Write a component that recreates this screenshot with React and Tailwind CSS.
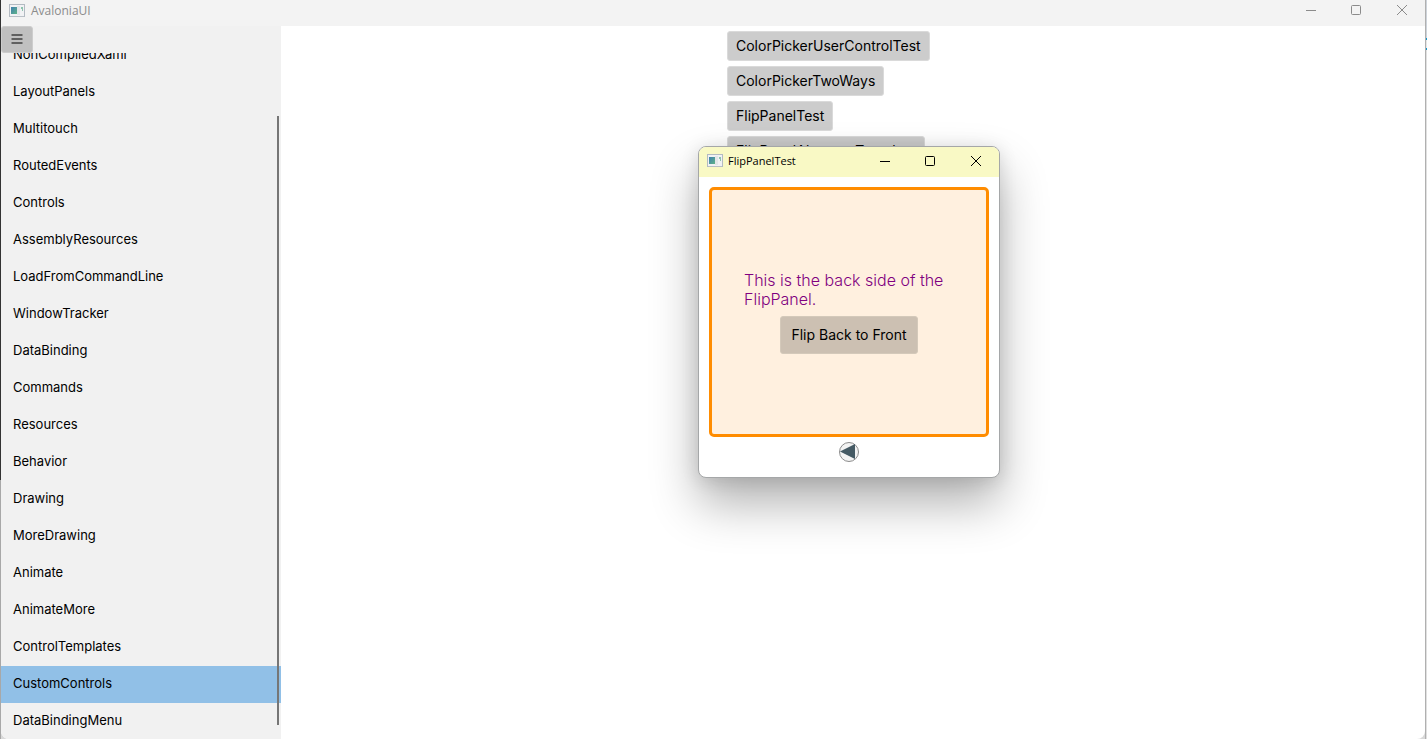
import React from "react";

const NAV_ITEMS = [
  "NonCompiledXaml",
  "LayoutPanels",
  "Multitouch",
  "RoutedEvents",
  "Controls",
  "AssemblyResources",
  "LoadFromCommandLine",
  "WindowTracker",
  "DataBinding",
  "Commands",
  "Resources",
  "Behavior",
  "Drawing",
  "MoreDrawing",
  "Animate",
  "AnimateMore",
  "ControlTemplates",
  "CustomControls",
  "DataBindingMenu",
];

const TESTS = [
  "ColorPickerUserControlTest",
  "ColorPickerTwoWays",
  "FlipPanelTest",
  "FlipPanelAlternateTemplate",
];

function AppIcon() {
  return (
    <svg width="16" height="14" viewBox="0 0 16 14" aria-hidden="true" className="shrink-0">
      <defs>
        <linearGradient id="pane" x1="0" y1="0" x2="1" y2="1">
          <stop offset="0" stopColor="#3f7fae" />
          <stop offset="1" stopColor="#5fb389" />
        </linearGradient>
      </defs>
      <rect x="0.5" y="0.5" width="15" height="12" fill="#f1f2f4" stroke="#b3bac2" />
      <rect x="2" y="3" width="6" height="7" fill="url(#pane)" />
      <rect x="8" y="2" width="3" height="9" fill="#e3e6e9" />
      <path d="M12 3h2v4h-1V5h-1z" fill="#8cc3ad" />
      <path d="M1 12.5h14" stroke="#b9bfc6" />
    </svg>
  );
}

function CaptionButton({ label, children }) {
  return (
    <button type="button" aria-label={label} className="flex h-full w-[46px] items-center justify-center">
      <svg width="12" height="12" viewBox="0 0 12 12" fill="none" stroke="currentColor" aria-hidden="true">
        {children}
      </svg>
    </button>
  );
}

function CaptionButtons() {
  return (
    <div className="flex h-full">
      <CaptionButton label="Minimize">
        <path d="M2 6.5h10" />
      </CaptionButton>
      <CaptionButton label="Maximize">
        <rect x="1.5" y="1.5" width="9" height="9" rx="1" />
      </CaptionButton>
      <CaptionButton label="Close">
        <path d="M1 1l10 10M11 1L1 11" />
      </CaptionButton>
    </div>
  );
}

function Sidebar() {
  return (
    <aside className="relative flex w-[280px] shrink-0 flex-col bg-[#f1f1f1]">
      <button
        type="button"
        aria-label="Toggle menu"
        className="flex h-[27px] w-8 shrink-0 items-center justify-center rounded-[3px] border border-[#cdcdcd] bg-[#c0c0c0] text-[#606060]"
      >
        <svg width="12" height="13" viewBox="0 0 12 13" stroke="currentColor" strokeWidth="2" aria-hidden="true">
          <path d="M0.5 2h11M0.5 6h11M0.5 10h11" />
        </svg>
      </button>
      <nav className="min-h-0 flex-1 overflow-hidden">
        <ul className="-mt-4">
          {NAV_ITEMS.map((name) => (
            <li key={name}>
              <a
                href={"#" + name}
                className={
                  name === "CustomControls"
                    ? "flex h-[37px] items-center bg-[#91c0e7] px-3 pb-[2px]"
                    : "flex h-[37px] items-center px-3 pb-[2px]"
                }
              >
                {name}
              </a>
            </li>
          ))}
        </ul>
      </nav>
      <div className="absolute top-[90px] right-[2px] bottom-[14px] w-[2px] bg-[#767676]" />
    </aside>
  );
}

function FlipDialog() {
  return (
    <section
      role="dialog"
      aria-label="FlipPanelTest"
      className="absolute top-[146px] left-[698px] flex w-[302px] flex-col overflow-hidden rounded-lg border border-[#a5a7a8] bg-white shadow-[0_26px_48px_rgba(0,0,0,0.3),0_2px_18px_rgba(0,0,0,0.12)]"
    >
      <header className="flex h-[30px] items-center justify-between bg-[#f9f9c5] pb-[2px] pl-2 text-black">
        <div className="flex items-center gap-[5px] font-['Open_Sans','Noto_Sans',sans-serif] text-[11px] font-normal">
          <AppIcon />
          <h2>FlipPanelTest</h2>
        </div>
        <CaptionButtons />
      </header>
      <div className="flex flex-col items-center px-[10px] pt-[10px] pb-[15px]">
        <div className="flex h-[250px] w-full flex-col items-center justify-center rounded-[5px] border-[3px] border-[#ff8c00] bg-[#fff0df] px-8">
          <p className="w-full text-base leading-[19px] font-[350] text-[#800080]">
            This is the back side of the FlipPanel.
          </p>
          <button
            type="button"
            className="mt-[7px] h-[38px] rounded-[3px] border border-[#d4c9ba] bg-[#ccc0b2] px-[10px] text-sm text-black"
          >
            Flip Back to Front
          </button>
        </div>
        <button type="button" aria-label="Flip panel" className="mt-[5px]">
          <svg width="20" height="20" viewBox="0 0 20 20" aria-hidden="true">
            <circle cx="10" cy="10" r="9.5" fill="#f3f3f3" stroke="#8c8c8c" />
            <path d="M1 9.5L16 2v15z" fill="#455a64" />
          </svg>
        </button>
      </div>
    </section>
  );
}

export default function App() {
  return (
    <div className="relative flex h-screen overflow-hidden bg-[#d9d9d9] font-[Inter,sans-serif] text-[13px] font-[380] text-black [font-optical-sizing:none]">
      <div className="flex w-px shrink-0 flex-col">
        <div className="h-[480px] bg-[#333333]" />
        <div className="flex-1 bg-[#a8a8a8]" />
      </div>
      <div className="flex min-w-0 flex-1 flex-col overflow-hidden rounded-b-lg bg-white">
        <header className="flex h-[26px] shrink-0 items-start justify-between bg-[#f3f3f3] pl-2 text-[#8b8b8b]">
          <div className="flex h-[21px] items-center gap-[6px] font-['Open_Sans','Noto_Sans',sans-serif] text-xs font-normal">
            <AppIcon />
            <h1>AvaloniaUI</h1>
          </div>
          <div className="h-5">
            <CaptionButtons />
          </div>
        </header>
        <div className="flex min-h-0 flex-1">
          <Sidebar />
          <main className="flex-1 pt-[5px]">
            <div className="mx-auto flex w-[252px] flex-col items-start gap-[5px]">
              {TESTS.map((name) => (
                <button
                  type="button"
                  key={name}
                  className="h-[30px] rounded-[3px] border border-[#dadada] bg-[#cccccc] px-2 text-sm text-black"
                >
                  {name}
                </button>
              ))}
            </div>
          </main>
        </div>
      </div>
      <div className="flex w-[2px] shrink-0 flex-col border-l border-[#b0b0b0]">
        <div className="h-[38px] bg-[#cdd3da]" />
        <div className="h-3 border-y-2 border-[#1296c9] bg-[#e6e6e6]" />
        <div className="flex-1 bg-[#e0e0e0]" />
      </div>
      <FlipDialog />
    </div>
  );
}
